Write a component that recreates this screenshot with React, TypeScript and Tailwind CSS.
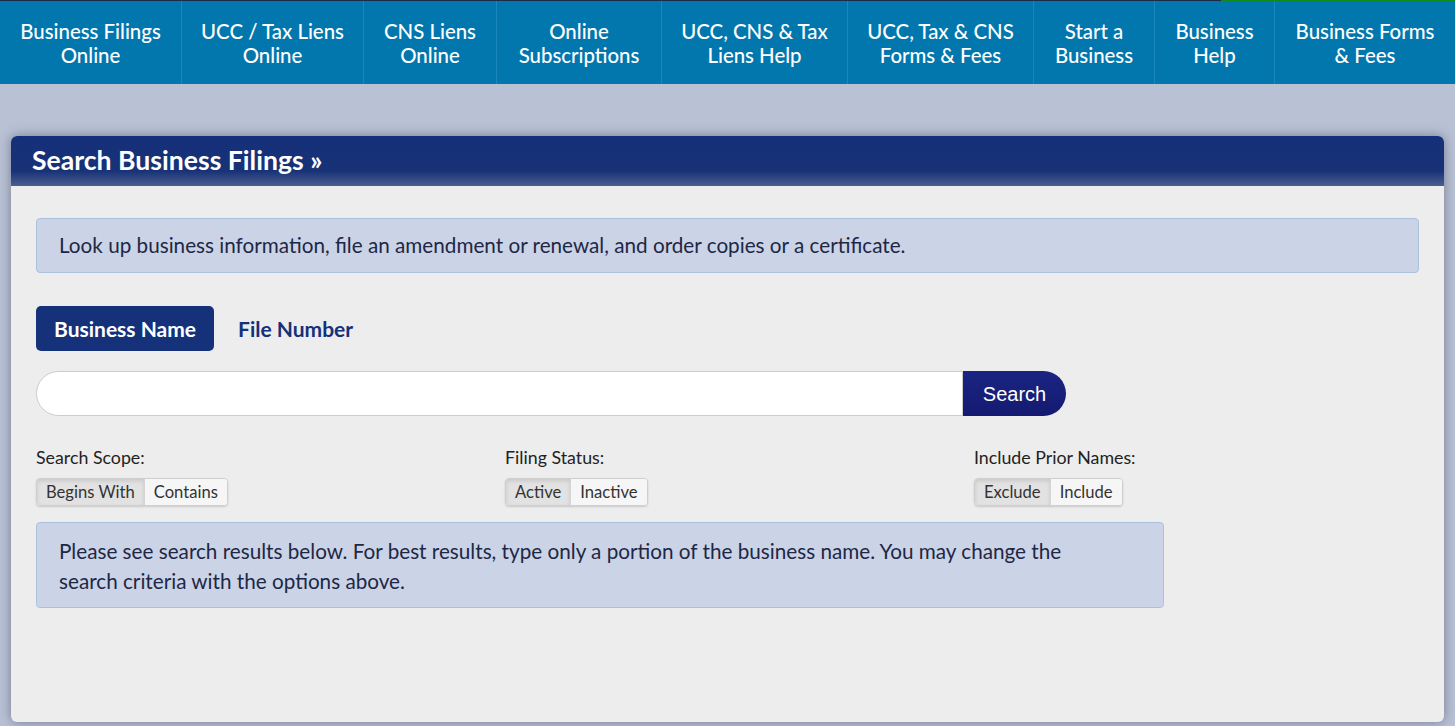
import React, { useState } from 'react'

const navLinks = [
  ['Business Filings', 'Online', 181],
  ['UCC / Tax Liens', 'Online', 182],
  ['CNS Liens', 'Online', 133],
  ['Online', 'Subscriptions', 165],
  ['UCC, CNS & Tax', 'Liens Help', 186],
  ['UCC, Tax & CNS', 'Forms & Fees', 186],
  ['Start a', 'Business', 121],
  ['Business', 'Help', 120],
  ['Business Forms', '& Fees', 181],
] as const

type ToggleProps = {
  label: string
  options: string[]
}

function Toggle({ label, options }: ToggleProps) {
  const [active, setActive] = useState(0)
  return (
    <div className="w-[469px] shrink-0">
      <div className="text-[17.8px] leading-[20px] text-[#222]">{label}</div>
      <div className="mt-[11px] inline-flex rounded-[4px] border border-[#cfcfcf] shadow-[0_1px_2px_rgba(0,0,0,0.15)] overflow-hidden">
        {options.map((opt, i) => (
          <button
            key={opt}
            onClick={() => setActive(i)}
            className={`h-[26px] px-[9px] text-[16.6px] text-[#333] ${
              i > 0 ? 'border-l border-[#d4d4d4]' : ''
            } ${
              active === i
                ? 'bg-[#e2e2e2] shadow-[inset_0_2px_4px_rgba(0,0,0,0.12)]'
                : 'bg-[#f6f6f6]'
            }`}
          >
            {opt}
          </button>
        ))}
      </div>
    </div>
  )
}

export default function App() {
  const [tab, setTab] = useState(0)

  return (
    <div className="min-h-[726px] bg-[#b9c1d5] font-['Lato','Open_Sans',sans-serif]">
      {/* top strip */}
      <div className="flex h-px">
        <div className="w-[1221px] bg-[#1c2a4a]" />
        <div className="flex-1 bg-[#0f8a1e]" />
      </div>

      {/* Navbar */}
      <nav className="flex h-[83px] bg-[#0277ae]">
        {navLinks.map(([a, b, w], i) => (
          <a
            key={a + b}
            href="#"
            style={{ width: w }}
            className={`flex flex-col items-center justify-center text-center text-white text-[20.4px] leading-[24px] font-medium ${
              i > 0 ? 'border-l border-[#1a87ba]' : ''
            }`}
          >
            <span>{a}</span>
            <span>{b}</span>
          </a>
        ))}
      </nav>

      <div className="px-[11px] pt-[52px] pb-[4px]">
        <div className="rounded-[6px] bg-[#ededed] shadow-[0_0_12px_rgba(60,70,90,0.55)] overflow-hidden h-[586px]">
          {/* Header */}
          <div className="h-[50px] bg-[linear-gradient(to_bottom,#14307a_0%,#183277_70%,#4a5f8f_100%)] flex items-center px-[21px]">
            <h1 className="text-white text-[26.6px] font-bold">
              Search Business Filings »
            </h1>
          </div>

          <div className="px-[25px] pt-[32px]">
            <div className="h-[55px] flex items-center rounded-[4px] border border-[#abc2de] bg-[#cbd3e6] px-[22px] text-[20.7px] text-[#1e2745]">
              Look up business information, file an amendment or renewal, and order copies or a certificate.
            </div>

            {/* Tabs */}
            <div className="mt-[33px] flex items-center gap-[6px]">
              {['Business Name', 'File Number'].map((t, i) => (
                <button
                  key={t}
                  onClick={() => setTab(i)}
                  className={`h-[45px] px-[18px] rounded-[5px] text-[21px] font-bold ${
                    tab === i ? 'bg-[#14317a] text-white' : 'text-[#14317a]'
                  }`}
                >
                  {t}
                </button>
              ))}
            </div>

            {/* Search box */}
            <div className="mt-[20px] flex h-[45px] w-[1030px]">
              <input
                className="flex-1 rounded-l-full border border-[#cccccc] bg-white px-5 outline-none"
                type="text"
              />
              <button className="w-[103px] rounded-r-full bg-[linear-gradient(to_bottom,#1a2482,#141a70)] text-white text-[20px] font-['Liberation_Sans',Arial,sans-serif]">
                Search
              </button>
            </div>

            {/* Options */}
            <div className="mt-[31px] flex">
              <Toggle label="Search Scope:" options={['Begins With', 'Contains']} />
              <Toggle label="Filing Status:" options={['Active', 'Inactive']} />
              <Toggle label="Include Prior Names:" options={['Exclude', 'Include']} />
            </div>

            <div className="mt-[16px] w-[1128px] h-[86px] rounded-[4px] border border-[#abc2de] bg-[#cbd3e6] pl-[22px] pr-[60px] pt-[13px] text-[20.7px] leading-[30px] text-[#1e2745]">
              Please see search results below. For best results, type only a portion of the business name. You may change the search criteria with the options above.
            </div>
          </div>
        </div>
      </div>
    </div>
  )
}
